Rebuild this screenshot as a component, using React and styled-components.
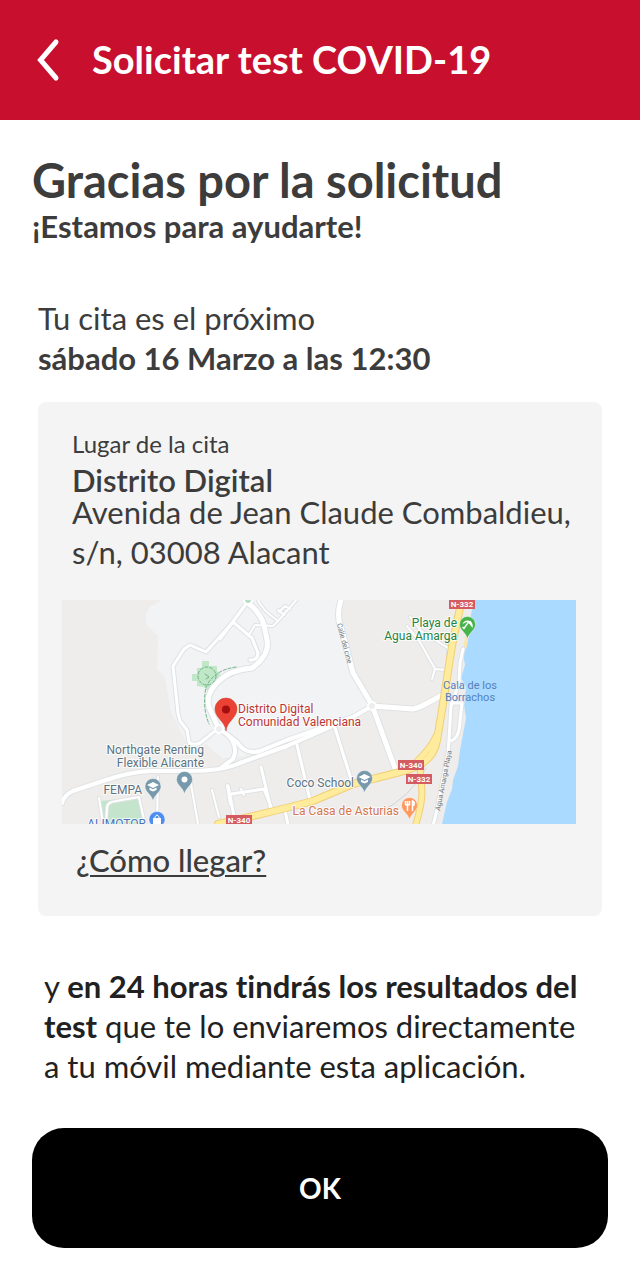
import React from "react";
import styled, { createGlobalStyle } from "styled-components";

const GlobalStyle = createGlobalStyle`
  *, *::before, *::after { box-sizing: border-box; }
  body {
    margin: 0;
    background: #ffffff;
    color: #3c3c3c;
    font-family: Lato, "Open Sans", sans-serif;
    font-variant-ligatures: none;
  }
  h1, h2, h3, p { margin: 0; }
`;

const Screen = styled.div`
  min-height: 100vh;
  display: flex;
  flex-direction: column;
`;

const Header = styled.header`
  display: flex;
  align-items: center;
  gap: 20px;
  min-height: 120px;
  padding: 0 24px;
  background: #c8102e;
  color: #ffffff;
`;

const BackButton = styled.button`
  display: flex;
  align-items: center;
  justify-content: center;
  width: 48px;
  height: 48px;
  padding: 0;
  border: 0;
  background: none;
  color: inherit;
  cursor: pointer;
`;

const HeaderTitle = styled.h1`
  padding-bottom: 2px;
  font-size: 38px;
  line-height: 48px;
  font-weight: 700;
`;

const Main = styled.main`
  flex: 1;
  display: flex;
  flex-direction: column;
  padding: 32px;
`;

const Greeting = styled.h2`
  font-size: 47px;
  line-height: 56px;
  font-weight: 700;
`;

const Subtitle = styled.p`
  font-size: 31px;
  line-height: 36px;
  font-weight: 700;
`;

const Appointment = styled.p`
  margin: 54px 6px 24px;
  font-size: 31px;
  line-height: 40px;
`;

const Card = styled.section`
  margin: 0 6px;
  padding: 26px 26px 32px 24px;
  border-radius: 8px;
  background: #f4f4f4;
`;

const Place = styled.div`
  padding: 0 0 0 10px;
`;

const PlaceLabel = styled.p`
  font-size: 24px;
  line-height: 32px;
`;

const PlaceName = styled.h3`
  padding-top: 2px;
  font-size: 31px;
  line-height: 36px;
  font-weight: 600;
`;

const Address = styled.address`
  margin-top: -6px;
  font-size: 31px;
  line-height: 40px;
  font-style: normal;
`;

const Map = styled.svg`
  display: block;
  width: 100%;
  height: auto;
  margin: 28px 0 14px;
  font-family: Roboto, "Liberation Sans", sans-serif;
`;

const Directions = styled.a`
  display: inline-block;
  margin: 0 0 2px 14px;
  color: inherit;
  font-size: 31px;
  line-height: 44px;
  font-weight: 500;
  text-decoration: underline;
  text-decoration-thickness: 2px;
  text-underline-offset: 3px;
`;

const Notice = styled.p`
  margin: 50px 24px 42px 12px;
  color: #212121;
  font-size: 31px;
  line-height: 40px;
`;

const OkButton = styled.button`
  width: 100%;
  min-height: 120px;
  border: 0;
  border-radius: 32px;
  background: #000000;
  color: #ffffff;
  font: 700 28px/40px Lato, "Open Sans", sans-serif;
  cursor: pointer;
`;

const streets = [
  ["M234 621 L206 652 L190 645 L184 649 L173 666 L178 713 L180 721 L187 730 L189 742 Q192 746 200 743 L215 731", 4],
  ["M220 639 L246 604 M233 622 L252 638 L258 653 Q258 660 250 660", 4],
  ["M258 600 Q262 610 278 621 L273 626 L255 625 L250 633 M278 621 L298 598 M279 612 L285 606 L290 609 M284 615 L278 610", 3],
  ["M248 603 Q260 612 264 625 L267 640 Q270 655 252 668 Q230 670 219 681 Q205 694 209 707 L219 729", 6],
  ["M341 600 Q336 616 341 627 L353 673 L372 705 L396 771", 6],
  ["M372 706 L413 709 Q420 708 442 695", 6],
  ["M372 706 L353 717 L287 740 L260 751 Q245 755 237 742 L221 730", 5],
  ["M62 803 Q64 795 73 791 L106 780 Q130 772 150 771 L189 771 Q223 771 240 763 L287 746 L353 717 M228 735 Q239 747 233 759 L222 767", 5],
  ["M297 745 L310 800 M335 728 L351 779 M261 767 L271 809 M228 786 L234 816 M231 794 L264 789 L272 809 M285 811 L288 824", 4],
  ["M99 798 L103 824 M106 824 L107 808 Q107 802 116 801 L139 797 L145 824 M158 777 L157 824 M190 778 L198 824 M212 790 L219 817 M227 785 L230 804 M241 789 L244 795", 3],
  ["M410 617 L421 631 L448 648 L448 662 M407 626 L420 642 L435 669 L448 670 M435 669 L432 679", 3],
  ["M463 649 L460 663 L459 683 L451 706 L449 740 L448 753 L437 810 L433 826 M451 703 L462 703 L460 721 Q459 741 449 741", 4],
];

const highways = [
  ["M218 824 Q272 812 313 801 L353 784 L400 772 Q433 765 437 740 L442 710 L452 646 L462 598", 6],
  ["M409 769 Q431 749 436 736 M420 767 L422 792 Q422 805 415 827", 5],
];

const labels = [
  { x: 204, y: 754, fill: "#5b7382", anchor: "end", text: "Northgate Renting" },
  { x: 204, y: 767, fill: "#5b7382", anchor: "end", text: "Flexible Alicante" },
  { x: 142, y: 794, fill: "#5b7382", anchor: "end", text: "FEMPA" },
  { x: 146, y: 828, fill: "#4a72b8", anchor: "end", text: "ALIMOTOR" },
  { x: 354, y: 787, fill: "#5b7382", anchor: "end", text: "Coco School" },
  { x: 399, y: 815, fill: "#d4764d", anchor: "end", text: "La Casa de Asturias" },
  { x: 457, y: 627, fill: "#25833f", anchor: "end", text: "Playa de" },
  { x: 457, y: 640, fill: "#25833f", anchor: "end", text: "Agua Amarga" },
  { x: 470, y: 689, fill: "#5581bd", anchor: "middle", text: "Cala de los", size: 11, halo: "none" },
  { x: 470, y: 701, fill: "#5581bd", anchor: "middle", text: "Borrachos", size: 11, halo: "none" },
  { x: 238, y: 713, fill: "#bd3532", anchor: "start", text: "Distrito Digital" },
  { x: 238, y: 726, fill: "#bd3532", anchor: "start", text: "Comunidad Valenciana" },
];

const shields = [
  { x: 449, y: 599, text: "N-332" },
  { x: 398, y: 760, text: "N-340" },
  { x: 406, y: 774, text: "N-332" },
  { x: 226, y: 815, text: "N-340" },
];

function Pin({ x, y, color, children }) {
  return (
    <g transform={`translate(${x} ${y})`}>
      <path
        d="M0 22 C-1 16 -8 13 -8 7.500 A8 8 0 0 1 8 7.500 C8 13 1 16 0 22Z"
        fill={color}
        stroke="#ffffff"
        strokeOpacity=".6"
        strokeWidth=".7"
      />
      {children}
    </g>
  );
}

const Cap = () => (
  <path d="M-6 6 L0 3 L6 6 L0 9Z M-3.500 8.500 L0 10.200 L3.500 8.500 V11 L0 12.500 L-3.500 11Z" fill="#fff" />
);

function LocationMap() {
  return (
    <Map viewBox="62 600 514 224" role="img" aria-label="Mapa de Distrito Digital">
      <rect x="62" y="600" width="514" height="224" fill="#eeedec" />
      <path
        d="M162 600 L150 607 Q143 614 147 625 L158 636 L157 668 L165 678 L171 712 L186 742 Q192 750 206 744 L222 758 L240 757 L287 742 L372 707 L352 671 L340 622 L342 600Z"
        fill="#f1f3f5"
      />
      <path d="M100 801 L141 797 L145 824 H104Z" fill="#c4e4cc" />
      <path
        d="M202 661 H209 V666 H217 V671 L221 675 L211 684 L208 692 L204 687 L197 686 V681 H192 V674 H197 V668 H202Z"
        fill="#c0e7c7"
      />
      <path
        d="M475 600 L471 614 L470 630 L466 648 L463 653 L465 665 L461 678 L466 687 L464 705 L466 718 L460 750 L458 766 L453 780 L452 789 L447 802 L442 824 H576 V600Z"
        fill="#aadaff"
      />
      <path d="M470 625 L467 647 L463 650 L466 630Z" fill="#f7e6b2" />

      <g fill="none" strokeLinecap="round" strokeLinejoin="round">
        {streets.map(([d, w]) => (
          <path key={d} d={d} stroke="#dfe2e4" strokeWidth={w + 1} />
        ))}
        {streets.map(([d, w]) => (
          <path key={d} d={d} stroke="#ffffff" strokeWidth={w - 1} />
        ))}
        <path d="M422 768 Q429 755 434 745 M380 812 Q410 798 426 768" stroke="#d0d3d5" />
        {highways.map(([d, w]) => (
          <path key={d} d={d} stroke="#efcf78" strokeWidth={w + 2} />
        ))}
        {highways.map(([d, w]) => (
          <path key={d} d={d} stroke="#ffeb9c" strokeWidth={w} />
        ))}
        <g stroke="#6fb384" strokeDasharray="3 2">
          <circle cx="207" cy="676" r="9" />
          <path d="M236 667 Q214 670 206 687 Q202 707 209 724" />
          <path d="M205 674 L209 677 L206 679" strokeDasharray="none" />
        </g>
      </g>
      <circle cx="248" cy="600" r="4" fill="#b9ddc4" stroke="#ffffff" strokeWidth="2" />
      <g fill="#eceef0" stroke="#ffffff" strokeWidth="2">
        <circle cx="219" cy="729" r="4" />
        <circle cx="372" cy="706" r="4" />
        <circle cx="252" cy="668" r="1" />
      </g>

      {labels.map(({ x, y, fill, anchor, text, size = 12, halo = "#ffffff" }) => (
        <text
          key={text}
          x={x}
          y={y}
          fill={fill}
          textAnchor={anchor}
          fontSize={size}
          stroke={halo}
          strokeWidth="2"
          strokeOpacity=".8"
          paintOrder="stroke"
        >
          {text}
        </text>
      ))}
      <g fill="#74797d" fontSize="7">
        <text transform="translate(337 624) rotate(75)">Calle del cine</text>
        <text transform="translate(440 811) rotate(-79)">Agua Amarga Playa</text>
      </g>
      {shields.map(({ x, y, text }) => (
        <g key={`${x}-${text}`}>
          <rect x={x} y={y} width="26" height="10" fill="#d45b60" />
          <text x={x + 13} y={y + 8} fill="#fff" fontSize="8" fontWeight="700" textAnchor="middle">
            {text}
          </text>
        </g>
      ))}

      <Pin x={153} y={779} color="#7799ab"><Cap /></Pin>
      <Pin x={184.5} y={772} color="#7799ab"><circle cy="7.500" r="3" fill="#fff" /></Pin>
      <Pin x={364.500} y={771} color="#7799ab"><Cap /></Pin>
      <Pin x={157} y={812} color="#4c8df0">
        <path d="M-4 6 H4 V13 H-4Z" fill="#fff" />
        <path d="M-2 7 V5 Q0 1 2 5 V7" fill="none" stroke="#fff" />
      </Pin>
      <Pin x={409.500} y={798} color="#ff9960">
        <path d="M-4 3 V7 M-2 3 V13 M0 3 V7 M-4 7 H0 M3 13 V3 Q6 4 4 8" fill="none" stroke="#fff" strokeWidth="1.500" />
      </Pin>
      <Pin x={467.500} y={617} color="#47b34b">
        <path d="M-5 7 Q-3 2 3 4 Q6 7 5 11 L2 7 L-1 5Z" fill="#fff" />
        <path d="M1 5 L-4 12 M-5 10 L-3 12" fill="none" stroke="#fff" strokeWidth="1.300" />
      </Pin>
      <path
        d="M226 731 C225 721 215 718 215 709 A11 11 0 0 1 237 709 C237 718 227 721 226 731Z"
        fill="#ea4335"
        stroke="#d23a30"
        strokeWidth=".5"
      />
      <circle cx="226" cy="709.500" r="4" fill="#a50e0e" />
    </Map>
  );
}

export default function App() {
  return (
    <Screen>
      <GlobalStyle />
      <Header>
        <BackButton type="button" aria-label="Volver">
          <svg width="24" height="44" viewBox="0 0 24 44" fill="none" aria-hidden="true">
            <path d="M20 4 L4.500 22 L20 40" stroke="currentColor" strokeWidth="5" strokeLinecap="round" />
          </svg>
        </BackButton>
        <HeaderTitle>Solicitar test COVID-19</HeaderTitle>
      </Header>
      <Main>
        <Greeting>Gracias por la solicitud</Greeting>
        <Subtitle>¡Estamos para ayudarte!</Subtitle>
        <Appointment>
          Tu cita es el próximo
          <br />
          <strong>sábado 16 Marzo a las 12:30</strong>
        </Appointment>
        <Card>
          <Place>
            <PlaceLabel>Lugar de la cita</PlaceLabel>
            <PlaceName>Distrito Digital</PlaceName>
            <Address>
              Avenida de Jean Claude Combaldieu, s/n, 03008 Alacant
            </Address>
          </Place>
          <LocationMap />
          <Directions href="#como-llegar">¿Cómo llegar?</Directions>
        </Card>
        <Notice>
          y <strong>en 24 horas tindrás los resultados del test</strong> que te lo
          enviaremos directamente a tu móvil mediante esta aplicación.
        </Notice>
        <OkButton type="button">OK</OkButton>
      </Main>
    </Screen>
  );
}
